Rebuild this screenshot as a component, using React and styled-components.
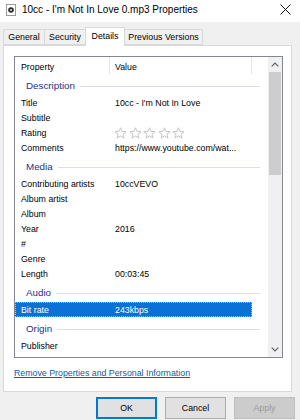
import styled, { createGlobalStyle } from "styled-components";

const Global = createGlobalStyle`
  html, body {
    margin: 0;
    padding: 0;
    background: #f0f0f0;
  }
  body {
    font-family: "Liberation Sans", Arial, sans-serif;
    color: #000;
  }
`;

const rows = [
  { group: "Description" },
  { name: "Title", value: "10cc - I'm Not In Love" },
  { name: "Subtitle", value: "" },
  { name: "Rating", stars: true },
  { name: "Comments", value: "https://www.youtube.com/wat..." },
  { group: "Media" },
  { name: "Contributing artists", value: "10ccVEVO" },
  { name: "Album artist", value: "" },
  { name: "Album", value: "" },
  { name: "Year", value: "2016" },
  { name: "#", value: "" },
  { name: "Genre", value: "" },
  { name: "Length", value: "00:03:45" },
  { group: "Audio" },
  { name: "Bit rate", value: "243kbps", selected: true },
  { group: "Origin" },
  { name: "Publisher", value: "" },
];

export default function App() {
  return (
    <>
      <Global />
      <Window>
        <TitleBar>
          <FileIcon />
          <Title>10cc - I'm Not In Love 0.mp3 Properties</Title>
          <Close>
            <svg width="11" height="11" viewBox="0 0 11 11">
              <path d="M0.5 0.5 L10.5 10.5 M10.5 0.5 L0.5 10.5" stroke="#111" strokeWidth="1" />
            </svg>
          </Close>
        </TitleBar>

        <TabStrip>
          <Tab $w={42}>General</Tab>
          <Tab $w={42}>Security</Tab>
          <Tab $w={40} $active>Details</Tab>
          <Tab $w={79}>Previous Versions</Tab>
        </TabStrip>

        <Panel>
          <ListBox>
            <ListArea>
              <HeaderRow>
                <HeaderCell $w={95}>Property</HeaderCell>
                <HeaderCell $w={142} $pad={5}>Value</HeaderCell>
              </HeaderRow>
              {rows.map((r, i) =>
                r.group ? (
                  <GroupRow key={i}>
                    <GroupLabel>{r.group}</GroupLabel>
                    <GroupLine />
                  </GroupRow>
                ) : (
                  <Row key={i}>
                    <Cells $selected={r.selected}>
                      <NameCell>{r.name}</NameCell>
                      <ValueCell>
                        {r.stars ? <Stars /> : r.value}
                      </ValueCell>
                    </Cells>
                  </Row>
                )
              )}
            </ListArea>
            <ScrollBar>
              <ArrowBtn>
                <Chevron up />
              </ArrowBtn>
              <Track>
                <Thumb />
              </Track>
              <ArrowBtn>
                <Chevron />
              </ArrowBtn>
            </ScrollBar>
          </ListBox>
          <RemoveLink href="#">Remove Properties and Personal Information</RemoveLink>
        </Panel>

        <ButtonRow>
          <DlgButton $default>OK</DlgButton>
          <DlgButton>Cancel</DlgButton>
          <DlgButton disabled>Apply</DlgButton>
        </ButtonRow>
      </Window>
    </>
  );
}

function FileIcon() {
  return (
    <IconBox>
      <svg width="10" height="12" viewBox="0 0 10 12">
        <rect x="0.5" y="0.5" width="9" height="11" fill="#fff" stroke="#9a9a9a" />
        <circle cx="5" cy="6" r="2.8" fill="#2b2b2b" />
        <circle cx="5" cy="6" r="0.9" fill="#fff" />
      </svg>
    </IconBox>
  );
}

function Stars() {
  return (
    <StarRow>
      {[0, 1, 2, 3, 4].map((i) => (
        <svg key={i} width="13" height="12" viewBox="0 0 13 12">
          <path
            d="M6.5 0.8 L8.1 4.4 L12 4.7 L9 7.2 L9.9 11 L6.5 9 L3.1 11 L4 7.2 L1 4.7 L4.9 4.4 Z"
            fill="none"
            stroke="#bdbdbd"
            strokeWidth="0.9"
            strokeLinejoin="round"
          />
        </svg>
      ))}
    </StarRow>
  );
}

function Chevron({ up }) {
  return (
    <svg width="8" height="5" viewBox="0 0 8 5">
      <path
        d={up ? "M0.7 4.3 L4 1 L7.3 4.3" : "M0.7 0.7 L4 4 L7.3 0.7"}
        fill="none"
        stroke="#606060"
        strokeWidth="1.2"
      />
    </svg>
  );
}

const Window = styled.div`
  width: 300px;
  height: 420px;
  background: #f0f0f0;
  display: flex;
  flex-direction: column;
  overflow: hidden;
`;

const TitleBar = styled.div`
  height: 22px;
  background: #fff;
  display: flex;
  align-items: center;
  padding: 0 8px 3px 6px;
  box-sizing: border-box;
`;

const IconBox = styled.div`
  width: 10px;
  height: 12px;
  display: flex;
  margin-right: 6px;
`;

const Title = styled.div`
  flex: 1;
  font-size: 10px;
  color: #000;
  white-space: nowrap;
`;

const Close = styled.div`
  display: flex;
  align-items: center;
  margin-right: 1px;
`;

const TabStrip = styled.div`
  height: 23px;
  display: flex;
  align-items: flex-end;
  padding-left: 3px;
  position: relative;
  z-index: 1;
`;

const Tab = styled.div`
  width: ${(p) => p.$w}px;
  height: ${(p) => (p.$active ? 19 : 16)}px;
  margin-left: -1px;
  margin-bottom: ${(p) => (p.$active ? -1 : 0)}px;
  box-sizing: border-box;
  border: 1px solid #d9d9d9;
  border-bottom: ${(p) => (p.$active ? "none" : "1px solid #d9d9d9")};
  background: ${(p) => (p.$active ? "#fff" : "#f0f0f0")};
  font-size: 8.8px;
  display: flex;
  align-items: center;
  justify-content: center;
  padding-bottom: ${(p) => (p.$active ? 2 : 0)}px;
  white-space: nowrap;
  &:first-child {
    margin-left: 0;
  }
`;

const Panel = styled.div`
  margin: 0 8px 0 3px;
  height: 347px;
  box-sizing: border-box;
  border: 1px solid #d9d9d9;
  background: #fff;
  padding: 10px 8px 0 10px;
  display: flex;
  flex-direction: column;
`;

const ListBox = styled.div`
  height: 302px;
  box-sizing: border-box;
  border: 1px solid #828790;
  display: flex;
  overflow: hidden;
`;

const ListArea = styled.div`
  flex: 1;
  overflow: hidden;
  font-size: 8.8px;
`;

const HeaderRow = styled.div`
  height: 17px;
  display: flex;
  align-items: stretch;
`;

const HeaderCell = styled.div`
  width: ${(p) => p.$w}px;
  box-sizing: border-box;
  padding: 3px 0 0 ${(p) => p.$pad || 6}px;
  display: flex;
  align-items: center;
  border-right: 1px solid #e5e5e5;
`;

const GroupRow = styled.div`
  height: 21px;
  display: flex;
  align-items: center;
  padding: 2px 8px 0 11px;
  box-sizing: border-box;
`;

const GroupLabel = styled.span`
  font-size: 9.8px;
  color: #1e3287;
  margin-right: 5px;
  white-space: nowrap;
`;

const GroupLine = styled.div`
  flex: 1;
  height: 1px;
  background: #dcdfe6;
  margin-top: 1px;
`;

const Row = styled.div`
  height: 15px;
  display: flex;
`;

const Cells = styled.div`
  width: 237px;
  display: flex;
  align-items: center;
  box-sizing: border-box;
  background: ${(p) => (p.$selected ? "#0a72d6" : "transparent")};
  color: ${(p) => (p.$selected ? "#fff" : "#000")};
  outline: ${(p) => (p.$selected ? "1px dotted rgba(255,255,255,0.6)" : "none")};
  outline-offset: -1px;
`;

const NameCell = styled.div`
  width: 95px;
  padding-left: 6px;
  box-sizing: border-box;
  white-space: nowrap;
`;

const ValueCell = styled.div`
  width: 142px;
  padding-left: 5px;
  box-sizing: border-box;
  white-space: nowrap;
  overflow: hidden;
  display: flex;
  align-items: center;
`;

const StarRow = styled.div`
  display: flex;
  gap: 1.5px;
  margin-left: -1px;
`;

const ScrollBar = styled.div`
  width: 14px;
  display: flex;
  flex-direction: column;
  background: #f0f0f0;
`;

const ArrowBtn = styled.div`
  height: 15px;
  display: flex;
  align-items: center;
  justify-content: center;
`;

const Track = styled.div`
  flex: 1;
  padding: 0 1px;
`;

const Thumb = styled.div`
  height: 103px;
  background: #cdcdcd;
`;

const RemoveLink = styled.a`
  margin-top: 10px;
  font-size: 8.8px;
  color: #0f5ca8;
  text-decoration: underline;
  align-self: flex-start;
  margin-left: 0;
`;

const ButtonRow = styled.div`
  display: flex;
  justify-content: flex-end;
  gap: 8px;
  padding: 5px 5px 0 0;
`;

const DlgButton = styled.button`
  width: 61px;
  height: 22px;
  box-sizing: border-box;
  font-family: "Liberation Sans", Arial, sans-serif;
  font-size: 8.8px;
  padding: 0;
  background: ${(p) => (p.disabled ? "#cccccc" : "#e1e1e1")};
  color: ${(p) => (p.disabled ? "#9a9a9a" : "#000")};
  border: ${(p) => (p.$default ? "2px solid #0078d7" : p.disabled ? "1px solid #bfbfbf" : "1px solid #adadad")};
  border-radius: 0;
`;
